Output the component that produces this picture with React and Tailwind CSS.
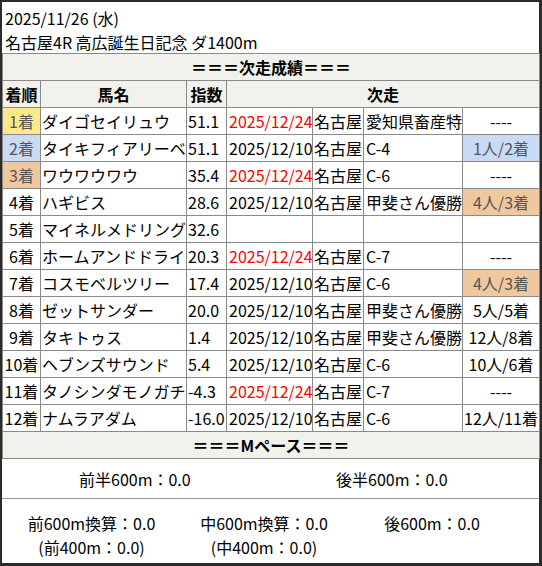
import React from 'react';

const RED = 'text-[#ff0000]';

const rows = [
  { pos: '1着', posBg: 'bg-[#ffe88c] text-[#555]', name: 'ダイゴセイリュウ', idx: '51.1', date: '2025/12/24', red: true, venue: '名古屋', race: '愛知県畜産特', res: '----' },
  { pos: '2着', posBg: 'bg-[#c9daf5] text-[#555]', name: 'タイキフィアリーベ', idx: '51.1', date: '2025/12/10', venue: '名古屋', race: 'C-4', res: '1人/2着', resBg: 'bg-[#c9daf5] text-[#555]' },
  { pos: '3着', posBg: 'bg-[#f0c8a0] text-[#555]', name: 'ワウワウワウ', idx: '35.4', date: '2025/12/24', red: true, venue: '名古屋', race: 'C-6', res: '----' },
  { pos: '4着', name: 'ハギビス', idx: '28.6', date: '2025/12/10', venue: '名古屋', race: '甲斐さん優勝', res: '4人/3着', resBg: 'bg-[#f0c8a0] text-[#555]' },
  { pos: '5着', name: 'マイネルメドリング', idx: '32.6', date: '', venue: '', race: '', res: '' },
  { pos: '6着', name: 'ホームアンドドライ', idx: '20.3', date: '2025/12/24', red: true, venue: '名古屋', race: 'C-7', res: '----' },
  { pos: '7着', name: 'コスモベルツリー', idx: '17.4', date: '2025/12/10', venue: '名古屋', race: 'C-6', res: '4人/3着', resBg: 'bg-[#f0c8a0] text-[#555]' },
  { pos: '8着', name: 'ゼットサンダー', idx: '20.0', date: '2025/12/10', venue: '名古屋', race: '甲斐さん優勝', res: '5人/5着' },
  { pos: '9着', name: 'タキトゥス', idx: '1.4', date: '2025/12/10', venue: '名古屋', race: '甲斐さん優勝', res: '12人/8着' },
  { pos: '10着', name: 'ヘブンズサウンド', idx: '5.4', date: '2025/12/10', venue: '名古屋', race: 'C-6', res: '10人/6着' },
  { pos: '11着', name: 'タノシンダモノガチ', idx: '-4.3', date: '2025/12/24', red: true, venue: '名古屋', race: 'C-7', res: '----' },
  { pos: '12着', name: 'ナムラアダム', idx: '-16.0', date: '2025/12/10', venue: '名古屋', race: 'C-6', res: '12人/11着' },
];

const cell = 'border border-[#8a8a8a] h-[26px] p-0 leading-[26px] whitespace-nowrap overflow-hidden';

export default function App() {
  return (
    <div
      className="w-[542px] h-[566px] bg-[#2b2b2b] pt-[2px] pl-[2px] text-[16px] text-black"
      style={{ fontFamily: '"Noto Sans CJK JP", sans-serif' }}
    >
      <div className="w-[537px] h-[561px] bg-white flex flex-col">
        <div className="h-[51px] pl-[3px] pt-[4px] leading-[24px]">
          <div>2025/11/26 (水)</div>
          <div>名古屋4R 高広誕生日記念 ダ1400m</div>
        </div>

        <table className="w-[537px] table-fixed border-collapse">
          <colgroup>
            <col className="w-[38px]" />
            <col className="w-[146px]" />
            <col className="w-[40px]" />
            <col className="w-[86px]" />
            <col className="w-[51px]" />
            <col className="w-[99px]" />
            <col className="w-[77px]" />
          </colgroup>
          <thead>
            <tr>
              <th colSpan={7} className={`${cell} bg-[#f2f1ec] font-bold text-center`}>
                ＝＝＝次走成績＝＝＝
              </th>
            </tr>
            <tr className="bg-[#f2f1ec]">
              <th className={`${cell} font-bold text-center`}>着順</th>
              <th className={`${cell} font-bold text-center`}>馬名</th>
              <th className={`${cell} font-bold text-center`}>指数</th>
              <th colSpan={4} className={`${cell} font-bold text-center`}>次走</th>
            </tr>
          </thead>
          <tbody>
            {rows.map((r) => (
              <tr key={r.pos}>
                <td className={`${cell} text-center ${r.posBg || ''}`}>{r.pos}</td>
                <td className={`${cell} pl-[1px]`}>{r.name}</td>
                <td className={`${cell} pl-[1px]`}>{r.idx}</td>
                <td className={`${cell} pl-[2px] ${r.red ? RED : ''}`}>{r.date}</td>
                <td className={`${cell} pl-[1px]`}>{r.venue}</td>
                <td className={`${cell} pl-[2px]`}>{r.race}</td>
                <td className={`${cell} text-center ${r.resBg || ''}`}>{r.res}</td>
              </tr>
            ))}
            <tr>
              <th colSpan={7} className={`${cell} bg-[#f2f1ec] font-bold text-center`}>
                ＝＝＝Mペース＝＝＝
              </th>
            </tr>
          </tbody>
        </table>

        <div className="grid grid-cols-[257px_1fr] h-[40px] items-center border-b border-[#999]">
          <div className="pl-[77px]">前半600m：0.0</div>
          <div className="pl-[77px]">後半600m：0.0</div>
        </div>

        <div className="flex pt-[12px] leading-[24px]">
          <div className="w-[179px] text-center">
            <div>前600m換算：0.0</div>
            <div>(前400m：0.0)</div>
          </div>
          <div className="w-[166px] text-center">
            <div>中600m換算：0.0</div>
            <div>(中400m：0.0)</div>
          </div>
          <div className="w-[170px] text-center">
            <div>後600m：0.0</div>
          </div>
        </div>
      </div>
    </div>
  );
}
